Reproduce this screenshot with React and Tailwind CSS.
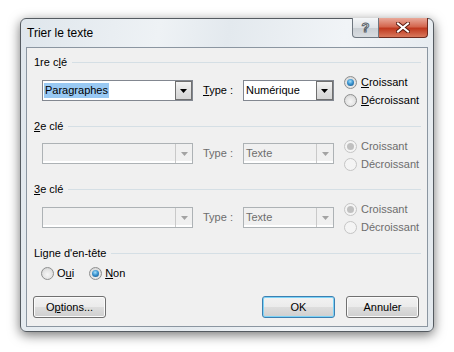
import React from 'react';

const font = "font-['Liberation_Sans',Arial,sans-serif]";

const Radio = ({ checked, disabled }) => (
    <span
        className={`flex items-center justify-center w-[13px] h-[13px] rounded-full border shrink-0 ${disabled
            ? 'border-[#c5c5c5] bg-[#f4f4f4]'
            : 'border-[#8e8f8f] bg-[radial-gradient(circle_at_50%_60%,#f6f6f6_0%,#e3e3e3_55%,#c8c8c8_100%)]'
            }`}
    >
        {checked && (
            <span
                className={`w-[7px] h-[7px] rounded-full ${disabled
                    ? 'bg-[#c0c0c0]'
                    : 'bg-[radial-gradient(circle_at_45%_35%,#a6e0fb_0%,#3b94d0_45%,#0d4a80_100%)]'
                    }`}
            />
        )}
    </span>
);

const RadioRow = ({ checked, disabled, children }) => (
    <div className="flex items-center h-[16px] gap-[4px]">
        <Radio checked={checked} disabled={disabled} />
        <span className={`leading-[16px] ${disabled ? 'text-[#6d6d6d]' : 'text-black'}`}>{children}</span>
    </div>
);

const Arrow = ({ disabled }) => (
    <svg width="7" height="4" viewBox="0 0 7 4">
        <path d="M0 0h7L3.5 4z" fill={disabled ? '#a3a3a3' : '#000'} />
    </svg>
);

const Combo = ({ className, value, disabled, selected }) => (
    <div
        className={`flex h-[21px] border ${disabled
            ? 'border-[#adb2b5] bg-[#f0f0f0] shadow-[inset_0_-2px_0_#ffffff]'
            : 'border-[#828790] bg-white'
            } ${className}`}
    >
        <div className="flex-1 flex items-center pl-[1px] overflow-hidden">
            <span
                className={`leading-[15px] px-[1px] ${selected ? 'bg-[#99c9f3] text-black' : disabled ? 'text-[#6d6d6d]' : 'text-black'}`}
            >
                {value}
            </span>
        </div>
        {disabled ? (
            <div className="w-[17px] h-full border-l border-[#c9c9c9] flex items-center justify-center">
                <Arrow disabled />
            </div>
        ) : (
            <div className="w-[17px] h-full border border-[#707070] bg-[linear-gradient(#f4f4f4,#e1e1e1_50%,#d6d6d6)] flex items-center justify-center">
                <Arrow />
            </div>
        )}
    </div>
);

const GroupHeader = ({ children, className = '' }) => (
    <div className={`flex items-center h-[16px] ${className}`}>
        <span className="leading-[16px] text-black">{children}</span>
        <div className="flex-1 h-px bg-[#d5dfe5] ml-[5px]" />
    </div>
);

const KeyRow = ({ value, type, disabled, selected, className, comboTop }) => (
    <div className={`flex items-start ml-[8px] ${className}`}>
        <Combo className={`w-[151px] ${comboTop}`} value={value} disabled={disabled} selected={selected} />
        <div className={`w-[40px] h-[21px] ml-[10px] flex items-center ${comboTop} ${disabled ? 'text-[#6d6d6d]' : 'text-black'}`}>
            {disabled ? 'Type :' : <span><u>T</u>ype :</span>}
        </div>
        <Combo className={`w-[91px] ${comboTop}`} value={type} disabled={disabled} />
        <div className="flex flex-col gap-[2px] ml-[10px]">
            <RadioRow checked disabled={disabled}>
                {disabled ? 'Croissant' : <><u>C</u>roissant</>}
            </RadioRow>
            <RadioRow disabled={disabled}>
                {disabled ? 'Décroissant' : <><u>D</u>écroissant</>}
            </RadioRow>
        </div>
    </div>
);

const Button = ({ children, primary }) => (
    <button
        className={`w-[73px] h-[22px] rounded-[3px] border text-[11px] text-black bg-[linear-gradient(#f2f2f2_0%,#ebebeb_50%,#dddddd_51%,#cfcfcf_100%)] ${primary
            ? 'border-[#3c7fb1] shadow-[inset_0_0_0_1px_#7dd3f7]'
            : 'border-[#707070] shadow-[inset_0_0_0_1px_#fbfbfb]'
            }`}
    >
        {children}
    </button>
);

const App = () => {
    return (
        <div className={`w-[454px] h-[352px] bg-white pl-[20px] pt-[18px] ${font} text-[11px]`}>
            <div className="relative w-[414px] h-[314px] rounded-[6px] border border-[#555b61] bg-[linear-gradient(100deg,#dfe6ec_0%,#eef2f5_30%,#e3e9ee_45%,#f1f4f7_70%,#e2e8ed_100%)] shadow-[0_3px_12px_rgba(0,0,0,0.55)] flex flex-col px-[5px] pb-[4px]">
                {/* Title bar */}
                <div className="h-[28px] flex items-center pl-[1px]">
                    <span className="text-[12px] text-black">Trier le texte</span>
                </div>
                <div className="absolute top-[-1px] right-[5px] flex h-[20px]">
                    <div className="w-[27px] h-full rounded-bl-[4px] border border-[#6f7780] border-t-0 bg-[linear-gradient(#f4f6f8,#dfe3e7_50%,#c9ced3_51%,#d9dde1)] flex items-center justify-center">
                        <span className="text-[13px] font-bold leading-none text-[#f6f6f6] [-webkit-text-stroke:1px_#5b636b]">?</span>
                    </div>
                    <div className="w-[49px] h-full rounded-br-[4px] border border-[#6e2a1e] border-t-0 border-l-0 bg-[linear-gradient(#e9a99a,#d4674f_45%,#c0391f_55%,#d8785c)] flex items-center justify-center">
                        <svg width="14" height="11" viewBox="0 0 14 11">
                            <path d="M2 1.5L12 9.5M12 1.5L2 9.5" stroke="#5a1b10" strokeWidth="4" strokeLinecap="square" />
                            <path d="M2 1.5L12 9.5M12 1.5L2 9.5" stroke="#ffffff" strokeWidth="2" strokeLinecap="square" />
                        </svg>
                    </div>
                </div>

                {/* Client area */}
                <div className="flex-1 border border-[#8b96a1] bg-[#f0f0f0] pl-[7px] pr-[6px] flex flex-col">
                    <GroupHeader className="mt-[6px]">1re c<u>l</u>é</GroupHeader>
                    <KeyRow value="Paragraphes" type="Numérique" selected className="mt-[4px]" comboTop="mt-[6px]" />

                    <GroupHeader className="mt-[10px]"><u>2</u>e clé</GroupHeader>
                    <KeyRow value="" type="Texte" disabled className="mt-[4px]" comboTop="mt-[5px]" />

                    <GroupHeader className="mt-[9px]"><u>3</u>e clé</GroupHeader>
                    <KeyRow value="" type="Texte" disabled className="mt-[4px]" comboTop="mt-[6px]" />

                    <GroupHeader className="mt-[10px]">Ligne d'en-tête</GroupHeader>
                    <div className="flex items-center ml-[7px] mt-[4px] gap-[15px]">
                        <div className="flex items-center h-[16px] gap-[3px]">
                            <Radio />
                            <span>O<u>u</u>i</span>
                        </div>
                        <div className="flex items-center h-[16px] gap-[3px]">
                            <Radio checked />
                            <span><u>N</u>on</span>
                        </div>
                    </div>

                    <div className="flex items-center mt-[15px] -ml-px mr-[2px]">
                        <Button>O<u>p</u>tions...</Button>
                        <div className="ml-auto flex gap-[11px]">
                            <Button primary>OK</Button>
                            <Button>Annuler</Button>
                        </div>
                    </div>
                </div>
            </div>
        </div>
    );
};

export default App;
